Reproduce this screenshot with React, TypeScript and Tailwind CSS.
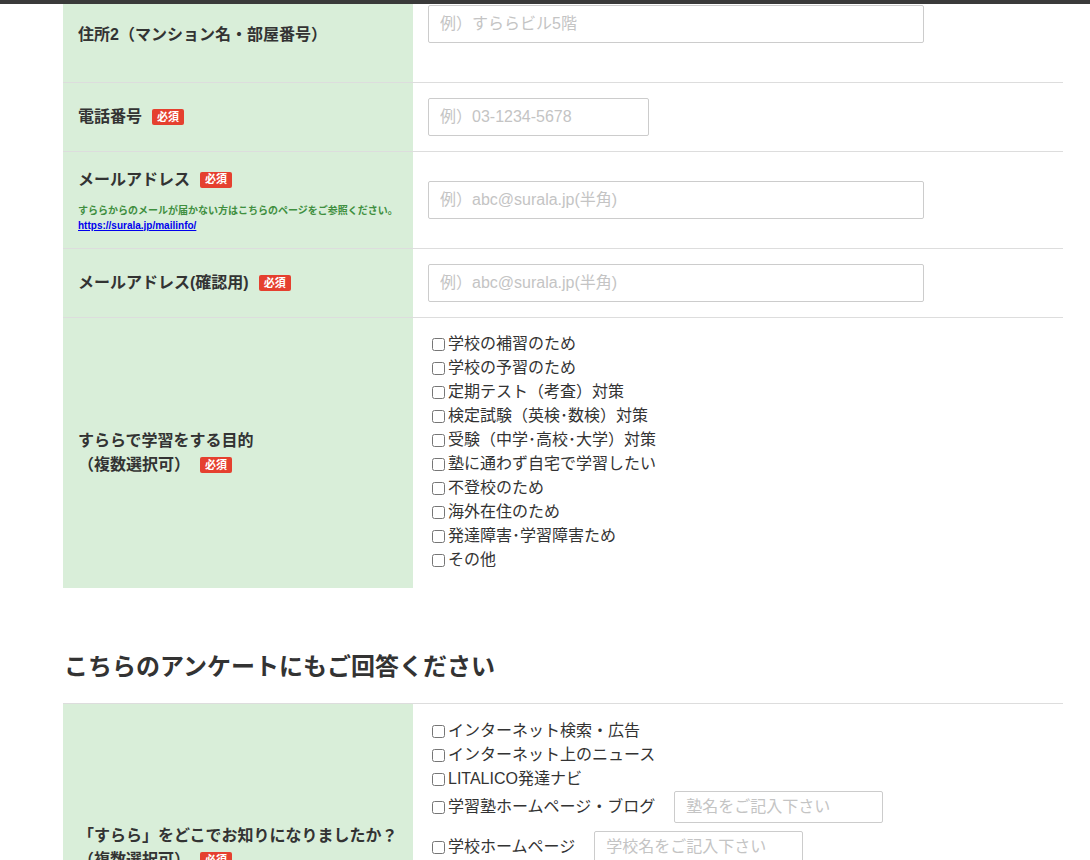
import React from "react";

const FONT = { fontFamily: '"Liberation Sans", "Noto Sans CJK JP", sans-serif' };

function Badge() {
  return (
    <span className="ml-[10px] inline-flex h-[16px] w-[32px] items-center justify-center rounded-[2px] bg-[#e5402f] text-[11px] font-bold leading-none text-white">
      必須
    </span>
  );
}

function TextInput({ placeholder, w }: { placeholder: string; w: string }) {
  return (
    <input
      type="text"
      placeholder={placeholder}
      className={`${w} h-[38px] rounded-[2px] border border-[#cccccc] bg-white px-[11px] text-[16px] text-[#333] outline-none placeholder:text-[#c4c4c4]`}
    />
  );
}

function Check({ label, children }: { label: string; children?: React.ReactNode }) {
  return (
    <label className="flex h-[24px] items-center text-[16px] leading-[24px] text-[#333]">
      <input type="checkbox" className="ml-[4px] mr-[3px] h-[13px] w-[13px]" />
      <span>{label}</span>
      {children}
    </label>
  );
}

const purposes = [
  "学校の補習のため",
  "学校の予習のため",
  "定期テスト（考査）対策",
  "検定試験（英検･数検）対策",
  "受験（中学･高校･大学）対策",
  "塾に通わず自宅で学習したい",
  "不登校のため",
  "海外在住のため",
  "発達障害･学習障害ため",
  "その他",
];

export default function App() {
  return (
    <div className="relative min-h-[860px] bg-white text-[#333]" style={FONT}>
      <div className="fixed left-0 right-0 top-0 z-10 h-[4px] bg-[#3a3a3a]" />
      <div className="ml-[63px] w-[1000px]">
        {/* Row 1 */}
        <div className="-mt-[12px] grid h-[95px] grid-cols-[350px_650px] border-b border-[#dddddd]">
          <div className="flex items-center bg-[#d9eed9] px-[15px] text-[16px] font-bold leading-[24px]">
            住所2（マンション名・部屋番号）
          </div>
          <div className="px-[15px] pt-[17px]">
            <TextInput placeholder="例）すららビル5階" w="w-[496px]" />
          </div>
        </div>
        {/* Row 2 */}
        <div className="grid grid-cols-[350px_650px] border-b border-[#dddddd]">
          <div className="flex items-center bg-[#d9eed9] px-[15px] text-[16px] font-bold leading-[24px]">
            電話番号
            <Badge />
          </div>
          <div className="flex items-center px-[15px] py-[15px]">
            <TextInput placeholder="例）03-1234-5678" w="w-[221px]" />
          </div>
        </div>
        {/* Row 3 */}
        <div className="grid h-[97px] grid-cols-[350px_650px] border-b border-[#dddddd]">
          <div className="flex flex-col justify-center bg-[#d9eed9] px-[15px]">
            <div className="flex items-center text-[16px] font-bold leading-[24px]">
              メールアドレス
              <Badge />
            </div>
            <div className="mt-[12px] text-[10px] font-bold leading-[14px] text-[#3f8f3f]">
              すららからのメールが届かない方はこちらのページをご参照ください。
            </div>
            <a href="#" className="text-[10px] font-bold leading-[15px] text-[#0000ee] underline">
              https://surala.jp/mailinfo/
            </a>
          </div>
          <div className="flex items-center px-[15px]">
            <TextInput placeholder="例）abc@surala.jp(半角)" w="w-[496px]" />
          </div>
        </div>
        {/* Row 4 */}
        <div className="grid grid-cols-[350px_650px] border-b border-[#dddddd]">
          <div className="flex items-center bg-[#d9eed9] px-[15px] text-[16px] font-bold leading-[24px]">
            メールアドレス(確認用)
            <Badge />
          </div>
          <div className="flex items-center px-[15px] py-[15px]">
            <TextInput placeholder="例）abc@surala.jp(半角)" w="w-[496px]" />
          </div>
        </div>
        {/* Row 5 */}
        <div className="grid grid-cols-[350px_650px]">
          <div className="flex flex-col justify-center bg-[#d9eed9] px-[15px] text-[16px] font-bold leading-[24px]">
            <div>すららで学習をする目的</div>
            <div className="flex items-center">
              （複数選択可）
              <Badge />
            </div>
          </div>
          <div className="flex flex-col px-[15px] pb-[16px] pt-[14px]">
            {purposes.map((p) => (
              <Check key={p} label={p} />
            ))}
          </div>
        </div>

        <h2 className="mb-[18px] mt-[61px] pl-[1px] text-[24px] font-bold leading-[36px] text-[#333]">
          こちらのアンケートにもご回答ください
        </h2>

        <div className="grid h-[289px] grid-cols-[350px_650px] border-t border-[#dddddd]">
          <div className="flex flex-col justify-center bg-[#d9eed9] px-[15px] text-[16px] font-bold leading-[24px]">
            <div>「すらら」をどこでお知りになりましたか？</div>
            <div className="flex items-center">
              （複数選択可）
              <Badge />
            </div>
          </div>
          <div className="flex flex-col px-[15px] pt-[15px]">
            <Check label="インターネット検索・広告" />
            <Check label="インターネット上のニュース" />
            <Check label="LITALICO発達ナビ" />
            <div className="mb-[8px] flex h-[32px] items-center">
              <Check label="学習塾ホームページ・ブログ">
                <input
                  type="text"
                  placeholder="塾名をご記入下さい"
                  className="ml-[19px] h-[32px] w-[209px] rounded-[2px] border border-[#cccccc] px-[11px] text-[16px] outline-none placeholder:text-[#c4c4c4]"
                />
              </Check>
            </div>
            <div className="mb-[8px] flex h-[32px] items-center">
              <Check label="学校ホームページ">
                <input
                  type="text"
                  placeholder="学校名をご記入下さい"
                  className="ml-[19px] h-[32px] w-[209px] rounded-[2px] border border-[#cccccc] px-[11px] text-[16px] outline-none placeholder:text-[#c4c4c4]"
                />
              </Check>
            </div>
            <Check label="知人・友人の紹介" />
            <Check label="新聞・雑誌" />
            <Check label="その他" />
          </div>
        </div>
      </div>
    </div>
  );
}
